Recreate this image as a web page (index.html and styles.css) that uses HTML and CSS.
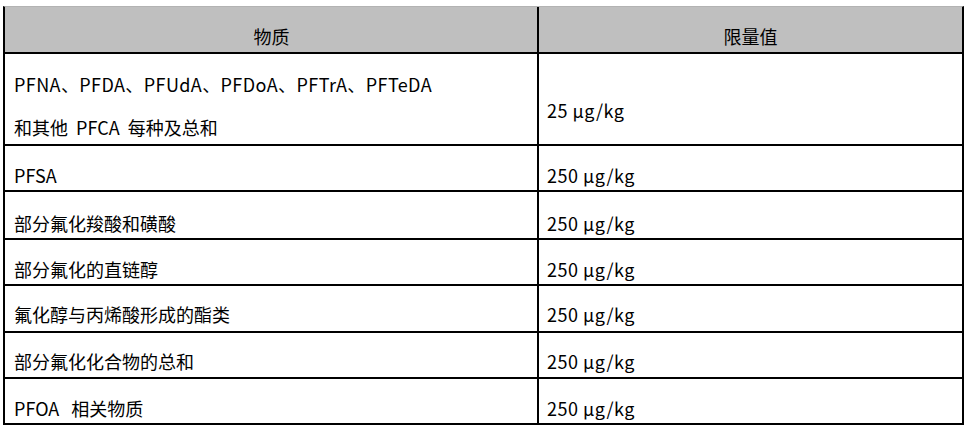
FILE: index.html
```html
<!DOCTYPE html>
<html lang="zh-CN">
<head>
<meta charset="utf-8">
<title>物质限量值</title>
<link rel="stylesheet" href="styles.css">
</head>
<body>
<table class="limits">
  <colgroup>
    <col class="col-sub">
    <col class="col-val">
  </colgroup>
  <thead>
    <tr class="row-head">
      <th class="cell-sub">物质</th>
      <th class="cell-val">限量值</th>
    </tr>
  </thead>
  <tbody>
    <tr class="row-tall">
      <td class="cell-sub multi">
        <span class="line line-wide">PFNA、PFDA、PFUdA、PFDoA、PFTrA、PFTeDA</span>
        <span class="line">和其他&nbsp; PFCA &nbsp;每种及总和</span>
      </td>
      <td class="cell-val val-mid">25 μg/kg</td>
    </tr>
    <tr class="row row-pfsa">
      <td class="cell-sub">PFSA</td>
      <td class="cell-val">250 μg/kg</td>
    </tr>
    <tr class="row row-48 pad-3">
      <td class="cell-sub">部分氟化羧酸和磺酸</td>
      <td class="cell-val">250 μg/kg</td>
    </tr>
    <tr class="row pad-3">
      <td class="cell-sub">部分氟化的直链醇</td>
      <td class="cell-val">250 μg/kg</td>
    </tr>
    <tr class="row row-47 pad-5">
      <td class="cell-sub">氟化醇与丙烯酸形成的酯类</td>
      <td class="cell-val">250 μg/kg</td>
    </tr>
    <tr class="row">
      <td class="cell-sub">部分氟化化合物的总和</td>
      <td class="cell-val">250 μg/kg</td>
    </tr>
    <tr class="row pad-3">
      <td class="cell-sub">PFOA&nbsp;&nbsp; 相关物质</td>
      <td class="cell-val">250 μg/kg</td>
    </tr>
  </tbody>
</table>
</body>
</html>
```
FILE: styles.css
```css
html, body {
  margin: 0;
  background: #ffffff;
}

body {
  padding: 6px 0 0 3px;
  font-family: "Noto Sans CJK SC", "Noto Sans", sans-serif;
  font-size: 18px;
  color: #000000;
}

.limits {
  width: 961px;
  table-layout: fixed;
  border-collapse: separate;
  border-spacing: 0;
  border-top: 1px solid #b3b3b3;
  border-left: 2px solid #000000;
  border-right: 2px solid #000000;
}

.col-sub {
  width: 534px;
}

.limits th,
.limits td {
  box-sizing: border-box;
  padding: 0 8px 4px 9px;
  line-height: 24px;
  vertical-align: bottom;
  text-align: left;
  font-weight: normal;
  border-bottom: 2px solid #000000;
  white-space: nowrap;
}

.limits .cell-sub {
  border-right: 2px solid #000000;
}

.limits .cell-val {
  padding-left: 8px;
}

.limits td.cell-val {
  letter-spacing: 0.5px;
}

.row-head {
  height: 47px;
}

.row-head th {
  background: #bfbfbf;
  text-align: center;
}

.row-tall {
  height: 92px;
}

.limits .multi {
  padding-bottom: 5px;
}

.line {
  display: block;
}

.line + .line {
  margin-top: 19px;
}

.line-wide {
  letter-spacing: 0.4px;
}

.limits .val-mid {
  padding-bottom: 22px;
}

.row {
  height: 46px;
}

.row-47 {
  height: 47px;
}

.row-48 {
  height: 48px;
}

.row-pfsa td {
  padding-bottom: 3px;
}

.pad-3 td {
  padding-bottom: 3px;
}

.pad-5 td {
  padding-bottom: 5px;
}
```
